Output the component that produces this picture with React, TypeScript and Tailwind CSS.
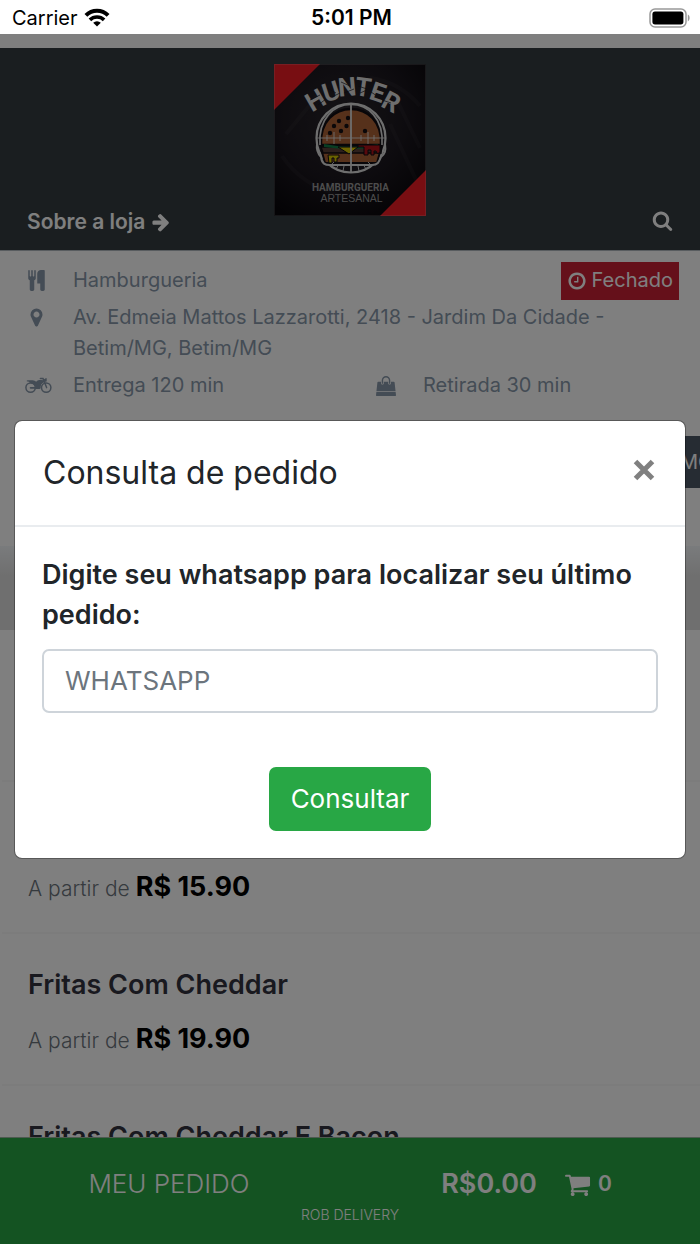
import React, { useState } from "react";

const icons = {
  cutlery:
    "M832 64v640q0 61-35.5 111t-92.5 70v779q0 52-38 90t-90 38h-128q-52 0-90-38t-38-90v-779q-57-20-92.5-70t-35.5-111v-640q0-26 19-45t45-19 45 19 19 45v416q0 26 19 45t45 19 45-19 19-45v-416q0-26 19-45t45-19 45 19 19 45v416q0 26 19 45t45 19 45-19 19-45v-416q0-26 19-45t45-19 45 19 19 45zm768 0v1600q0 52-38 90t-90 38h-128q-52 0-90-38t-38-90v-512h-224q-13 0-22.5-9.5t-9.5-22.5v-800q0-132 94-226t226-94h256q26 0 45 19t19 45z",
  marker:
    "M1152 640q0-106-75-181t-181-75-181 75-75 181 75 181 181 75 181-75 75-181zm256 0q0 109-33 179l-364 774q-16 33-47.5 52t-67.5 19-67.5-19-46.5-52l-365-774q-33-70-33-179 0-212 150-362t362-150 362 150 150 362z",
  clock:
    "M1024 544v448q0 14-9 23t-23 9h-320q-14 0-23-9t-9-23v-64q0-14 9-23t23-9h224v-352q0-14 9-23t23-9h64q14 0 23 9t9 23zm416 352q0-148-73-273t-198-198-273-73-273 73-198 198-73 273 73 273 198 198 273 73 273-73 198-198 73-273zm224 0q0 209-103 385.5t-279.5 279.5-385.5 103-385.5-103-279.5-279.5-103-385.5 103-385.5 279.5-279.5 385.5-103 385.5 103 279.5 279.5 103 385.5z",
  arrow:
    "M1600 960q0 54-37 91l-651 651q-39 37-91 37-51 0-90-37l-75-75q-38-38-38-91t38-91l293-293h-704q-52 0-84.5-37.5t-32.5-90.5v-128q0-53 32.5-90.5t84.5-37.5h704l-293-294q-38-36-38-90t38-90l75-75q38-38 90-38 53 0 91 38l651 651q37 35 37 90z",
  search:
    "M1216 832q0-185-131.5-316.5t-316.5-131.5-316.5 131.5-131.5 316.5 131.5 316.5 316.5 131.5 316.5-131.5 131.5-316.5zm512 832q0 52-38 90t-90 38q-54 0-90-38l-343-342q-179 124-399 124-143 0-273.5-55.5t-225-150-150-225-55.5-273.5 55.5-273.5 150-225 225-150 273.5-55.5 273.5 55.5 225 150 150 225 55.5 273.5q0 220-124 399l343 343q37 37 37 90z",
  cart:
    "M704 1536q0 52-38 90t-90 38-90-38-38-90 38-90 90-38 90 38 38 90zm896 0q0 52-38 90t-90 38-90-38-38-90 38-90 90-38 90 38 38 90zm128-1088v512q0 24-16.5 42.5t-40.5 21.5l-1044 122q13 60 13 70 0 16-24 64h920q26 0 45 19t19 45-19 45-45 19h-1024q-26 0-45-19t-19-45q0-11 8-31.5t16-36 21.5-40 15.5-29.5l-177-823h-204q-26 0-45-19t-19-45 19-45 45-19h256q16 0 28.5 6.5t19.5 15.5 13 24.5 8 26 5.5 29.5 4.5 26h1201q26 0 45 19t19 45z",
  bag:
    "M1757 1408l35 313q3 28-16 50-19 21-48 21h-1664q-29 0-48-21-19-22-16-50l35-313h1722zm-93-839l86 775h-1708l86-775q3-24 21-40.5t43-16.5h256v128q0 53 37.5 90.5t90.5 37.5 90.5-37.5 37.5-90.5v-128h384v128q0 53 37.5 90.5t90.5 37.5 90.5-37.5 37.5-90.5v-128h256q25 0 43 16.5t21 40.5zm-384-185v256q0 26-19 45t-45 19-45-19-19-45v-256q0-106-75-181t-181-75-181 75-75 181v256q0 26-19 45t-45 19-45-19-19-45v-256q0-159 112.5-271.5t271.5-112.5 271.5 112.5 112.5 271.5z",
};

function Icon({ name, className }: { name: keyof typeof icons; className: string }) {
  return (
    <svg viewBox="0 0 1792 1792" fill="currentColor" className={className} aria-hidden="true">
      <path d={icons[name]} />
    </svg>
  );
}

function Motorcycle() {
  return (
    <svg viewBox="0 0 27 17" className="ml-1 h-[17px] w-[27px] shrink-0" aria-hidden="true">
      <g fill="none" stroke="currentColor">
        <circle cx="5.6" cy="10.6" r="4.7" strokeWidth="1.5" />
        <circle cx="21.2" cy="10.6" r="4.7" strokeWidth="1.5" />
        <path d="M15.4 1.4h2.6l3.6 9.2" strokeWidth="1.5" strokeLinecap="round" />
        <path d="M5.6 10.8h7" strokeWidth="1.8" strokeLinecap="round" />
        <path d="M15 11.6c-.3-3.4 1-6.2 4.2-7.2" strokeWidth="1.2" />
      </g>
      <path
        fill="currentColor"
        d="M2.6 3.2h5c1.8 0 2.5 1 3.6 1.5 1.8-1.6 3.8-1.8 6.2-1.4l3.4-2.1c.5-.2.9 0 .9.5v2.4c0 .4-.3.6-.7.6l-2 .1c-3 1.3-3.8 3.6-3.8 6.4 0 .5-.3.8-.8.8h-3.4c-.4-3.3-2.4-5.5-6.2-6.3-.6-.8-1.3-1.3-2.6-1.3-.7-.2-.7-1 .4-1.2z"
      />
    </svg>
  );
}

function Wifi() {
  return (
    <svg viewBox="0 0 26 19" className="h-[19px] w-[26px]" aria-hidden="true">
      <g fill="none" stroke="#000">
        <path d="M1.9 7.4a15.8 15.8 0 0 1 22.2 0" strokeWidth="4" />
        <path d="M5.9 11.9a10.1 10.1 0 0 1 14.2 0" strokeWidth="3.6" />
      </g>
      <path d="M13 18.6l-3.8-3.9a5.4 5.4 0 0 1 7.6 0z" />
    </svg>
  );
}

function Battery() {
  return (
    <svg viewBox="0 0 42 20" className="h-5 w-[42px]" aria-hidden="true">
      <rect x="1" y="1" width="36" height="18" rx="5" fill="none" stroke="#999" strokeWidth="1.5" />
      <rect x="3.4" y="3.6" width="31" height="12.8" rx="2.6" />
      <path d="M38.8 6.6c2.4.9 2.4 5.9 0 6.8z" fill="#999" />
    </svg>
  );
}

const hunter = [
  { c: "H", x: 46, y: 44, r: -30 },
  { c: "U", x: 60, y: 36, r: -18 },
  { c: "N", x: 74, y: 32, r: -5 },
  { c: "T", x: 88, y: 32, r: 8 },
  { c: "E", x: 101, y: 37, r: 19 },
  { c: "R", x: 113, y: 46, r: 28 },
];

function Logo() {
  return (
    <svg viewBox="0 0 152 152" className="mb-5 size-[152px]" role="img" aria-label="Hunter Hamburgueria Artesanal">
      <defs>
        <radialGradient id="board" cx="45%" cy="35%" r="75%">
          <stop offset="0" stopColor="#2a262c" />
          <stop offset="0.55" stopColor="#1b171e" />
          <stop offset="1" stopColor="#08060a" />
        </radialGradient>
      </defs>
      <rect width="152" height="152" fill="url(#board)" />
      <g stroke="#fff" strokeOpacity="0.03" strokeWidth="4" fill="none">
        <path d="M96 14q30 4 50 28M116 60l28 60M8 92q20 30 60 40M12 70L50 24M120 30l26 54" />
      </g>
      <path d="M0 0h46L0 46zM152 152h-46l46-46z" fill="#f01c24" />
      <g fill="#ddd" fontFamily="'Roboto', 'Liberation Sans', sans-serif" fontWeight="700" fontSize="26" textAnchor="middle">
        {hunter.map((l) => (
          <text key={l.c} x={l.x} y={l.y} transform={`rotate(${l.r} ${l.x} ${l.y})`}>
            {l.c}
          </text>
        ))}
      </g>
      <g stroke="#1b171e" strokeWidth="0.7" fill="none">
        <path d="M36 36l10-5M44 41l8-6M53 24l9 5M58 33l8-4M67 18l9 4M70 29l10-4M84 22l9 3M86 29l7-3M97 28l9 6M108 36l9 3" />
      </g>
      <circle cx="77" cy="74" r="34.5" fill="none" stroke="#ddd" strokeWidth="2.2" />
      <path d="M47 81c-3-48 63-48 60 0z" fill="#ad6237" stroke="#110d12" strokeWidth="2.5" />
      <path d="M46 81c-4-54 66-54 62 0" fill="none" stroke="#ddd" strokeWidth="1.6" />
      <g fill="#150f12">
        <circle cx="65" cy="57" r="2.2" />
        <circle cx="74" cy="54" r="2.2" />
        <circle cx="60" cy="62" r="2.2" />
        <circle cx="72.5" cy="62" r="2.2" />
        <circle cx="56" cy="69" r="2.2" />
        <circle cx="67" cy="67" r="2.2" />
        <circle cx="91" cy="67" r="2.2" />
      </g>
      <path d="M48 88h58l-3 11H51z" fill="#ad6237" stroke="#110d12" strokeWidth="2" />
      <path d="M47 83h60v6H49z" fill="#5a4038" stroke="#110d12" strokeWidth="1.5" />
      <path d="M50 80q27 5 54 0v3q-27 4-54 0z" fill="#137a45" />
      <path d="M64 83h20l-9 7z" fill="#d8c600" stroke="#110d12" />
      <path d="M84 81h22v7q-3 3-4-1h-2v4h-3v-5h-3v5h-4v-8h-6z" fill="#b31219" stroke="#110d12" />
      <path d="M54 91h11v3h-2v4h-3v-4h-2v5h-3z" fill="#d8c600" stroke="#110d12" />
      <path d="M43 80c-1 7 1 10 4 13 1 7 4 8 9 8h42c6 0 7-3 9-8 4-3 5-6 4-13" fill="none" stroke="#ddd" strokeWidth="2" />
      <path d="M77 40v68" stroke="#ddd" strokeWidth="1.8" />
      <path d="M42 74h70" stroke="#ddd" strokeWidth="0.9" />
      <path d="M60 68v12M53 71v6M66 71v6M94 68v12M87 71v6M100 71v6" stroke="#ddd" strokeWidth="0.9" />
      <path d="M56 102l4-4M62 105l3-5M69 107l1-5M85 107l-1-5M92 105l-3-5M98 102l-4-4" stroke="#ddd" strokeWidth="0.9" />
      <text x="76.5" y="127" textAnchor="middle" fill="#999" fontFamily="'Roboto', 'Liberation Sans', sans-serif" fontWeight="700" fontSize="10">
        HAMBURGUERIA
      </text>
      <text x="77.5" y="138" textAnchor="middle" fill="#999" fontFamily="'Liberation Sans', sans-serif" fontSize="10.5">
        ARTESANAL
      </text>
      <rect x="0.5" y="0.5" width="151" height="151" fill="none" stroke="#fff" strokeOpacity="0.15" />
    </svg>
  );
}

function InfoRow({ icon, children }: { icon: React.ReactNode; children: React.ReactNode }) {
  return (
    <div className="flex items-start gap-[23px] pl-[22px]">
      <span className="flex h-[31px] w-7 shrink-0 items-center justify-center">{icon}</span>
      <span>{children}</span>
    </div>
  );
}

function Product({ name, price }: { name?: string; price?: string }) {
  return (
    <li className="ml-[2px] flex h-[152px] shrink-0 flex-col justify-end gap-[14px] border-b-2 border-[#f8f8f8] pb-[23px] pl-[26px] leading-10">
      {name && <h3 className="text-[27px] font-semibold text-[#32323f]">{name}</h3>}
      {price && (
        <p className="text-[21px] font-light text-[#6c757d]">
          A partir de <strong className="text-[27px] font-bold text-black">{price}</strong>
        </p>
      )}
    </li>
  );
}

export default function App() {
  const [phone, setPhone] = useState("");
  return (
    <div className="relative flex h-screen flex-col overflow-hidden bg-white font-['Inter','Liberation_Sans',sans-serif]">
      <div className="grid h-[34px] shrink-0 grid-cols-3 items-center pt-px pr-[9px] pl-3 text-[20px] text-black">
        <div className="flex items-center gap-[6px]">
          Carrier <Wifi />
        </div>
        <div className="text-center text-[21px] font-semibold">5:01 PM</div>
        <div className="flex justify-end">
          <Battery />
        </div>
      </div>

      <main className="flex min-h-0 flex-1 flex-col overflow-hidden pt-[14px]">
        <header className="grid shrink-0 grid-cols-[1fr_auto_1fr] items-end border-b border-[#b0b8be] bg-[#343c40] px-[27px] pt-4 pb-[14px] text-white">
          <a href="#sobre" className="flex items-center gap-[6px] text-[21px] leading-7 font-semibold">
            Sobre a loja <Icon name="arrow" className="size-5" />
          </a>
          <Logo />
          <button type="button" aria-label="Buscar" className="flex h-8 items-center justify-self-end">
            <Icon name="search" className="size-[21px]" />
          </button>
        </header>

        <section className="flex shrink-0 flex-col gap-[6px] pt-[14px] pb-[35px] text-[20px] leading-[31px] text-[#8898aa]">
          <div className="flex h-[31px] items-center justify-between pr-[21px]">
            <InfoRow icon={<Icon name="cutlery" className="size-[21px]" />}>Hamburgueria</InfoRow>
            <span className="flex h-[38px] items-center gap-[5px] bg-[#cb2034] px-[6px] text-white">
              <Icon name="clock" className="size-[20px]" /> Fechado
            </span>
          </div>
          <div className="pr-[70px]">
            <InfoRow icon={<Icon name="marker" className="size-[21px]" />}>
              Av. Edmeia Mattos Lazzarotti, 2418 - Jardim Da Cidade - Betim/MG, Betim/MG
            </InfoRow>
          </div>
          <div className="grid grid-cols-2">
            <InfoRow icon={<Motorcycle />}>Entrega 120 min</InfoRow>
            <InfoRow icon={<Icon name="bag" className="size-5" />}>Retirada 30 min</InfoRow>
          </div>
        </section>

        <nav className="flex shrink-0 justify-end">
          <a href="#mo" className="h-[52px] w-10 overflow-hidden bg-[#4d5866] pl-5 text-[20px] leading-[52px] text-white">
            MO
          </a>
        </nav>
        <div className="mt-[58px] h-[84px] shrink-0 bg-linear-to-b from-[#f4f7fa] to-[#dfdfdf] to-35%" />

        <ul className="flex shrink-0 flex-col">
          <Product />
          <Product price="R$ 15.90" />
          <Product name="Fritas Com Cheddar" price="R$ 19.90" />
          <Product name="Fritas Com Cheddar E Bacon" price="R$ 19.90" />
        </ul>
      </main>

      <footer className="shrink-0 border-t border-[#9ab5a0] bg-[#28a745] pb-[18px] text-white">
        <button type="button" className="grid w-full grid-cols-2 items-center pt-[26px] leading-10">
          <span className="pr-3 text-[26px] font-light">MEU PEDIDO</span>
          <span className="flex items-center justify-center gap-[27px] pl-[3px] text-[27px] font-semibold">
            R$0.00
            <span className="flex items-center gap-[7px] text-[21px]">
              <Icon name="cart" className="size-[27px]" /> 0
            </span>
          </span>
        </button>
        <p className="text-center text-[14px] leading-[22px] font-light">ROB DELIVERY</p>
      </footer>

      <div className="absolute inset-x-0 top-[34px] bottom-0 flex items-center bg-black/50 px-[14px]">
        <div role="dialog" aria-modal="true" aria-labelledby="modal-title" className="w-full rounded-lg border border-black/30 bg-white bg-clip-padding text-[#212529]">
          <div className="flex items-center justify-between border-b-2 border-[#e9ecef] px-7 py-7">
            <h2 id="modal-title" className="text-[32px] leading-[48px] font-normal">
              Consulta de pedido
            </h2>
            <button type="button" aria-label="Fechar" className="mb-[6px]">
              <svg viewBox="0 0 26 26" className="size-[26px]" aria-hidden="true">
                <path d="M4.5 4.5l17 17M21.5 4.5l-17 17" stroke="#808080" strokeWidth="5" />
              </svg>
            </button>
          </div>
          <form className="flex flex-col px-[27px] pt-7 pb-[27px]" onSubmit={(e) => e.preventDefault()}>
            <label htmlFor="whatsapp" className="mb-[14px] text-[27px] leading-10 font-semibold">
              Digite seu whatsapp para localizar seu último pedido:
            </label>
            <input
              id="whatsapp"
              type="tel"
              placeholder="WHATSAPP"
              value={phone}
              onChange={(e) => setPhone(e.target.value)}
              className="h-16 rounded-[7px] border-2 border-[#ced4da] px-[21px] text-[26px] placeholder:text-[#6c757d]"
            />
            <button type="submit" className="mt-[54px] h-16 self-center rounded-[7px] bg-[#28a745] px-[22px] text-[26px] text-white">
              Consultar
            </button>
          </form>
        </div>
      </div>
    </div>
  );
}
